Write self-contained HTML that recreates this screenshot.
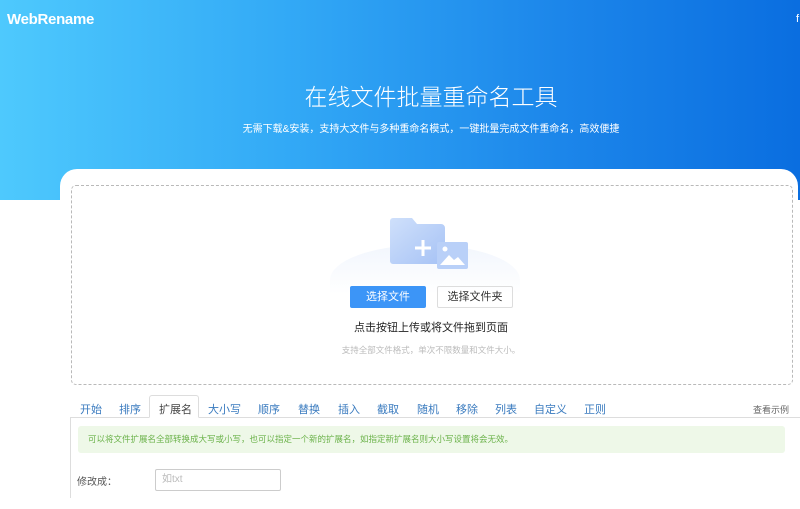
<!DOCTYPE html>
<html><head><meta charset="utf-8"><style>
*{margin:0;padding:0;box-sizing:border-box}
body{width:800px;height:495px;overflow:hidden;background:#fff;font-family:"Liberation Sans","Noto Sans CJK SC",sans-serif;position:relative}
.hero{position:absolute;left:0;top:0;width:800px;height:200px;background:linear-gradient(90deg,#4ec9fd 0%,#33aaf6 35%,#1c86ea 70%,#0a6ee0 100%)}
.logo{position:absolute;left:7px;top:11px;color:#fff;font-weight:bold;font-size:15px;letter-spacing:-0.3px}
.title{position:absolute;left:0;width:862px;top:78px;text-align:center;color:#fff;font-size:23px;font-weight:300}
.sub{position:absolute;left:0;width:862px;top:120px;text-align:center;color:#fff;font-size:10px}
.card{position:absolute;left:60px;top:169px;width:738px;height:340px;background:#fff;border-radius:17px 17px 0 0}
.drop{position:absolute;left:71px;top:185px;width:722px;height:200px;border:1px dashed #b9b9b9;border-radius:5px}
.arc{position:absolute;left:330px;top:245px;width:190px;height:70px;border-radius:50% 50% 0 0;background:linear-gradient(#f2f6fd,#fff 70%)}
.btn1{position:absolute;left:350px;top:286px;width:76px;height:22px;background:#3c95f7;color:#fff;font-size:11px;text-align:center;line-height:22px;border-radius:2px}
.btn2{position:absolute;left:437px;top:286px;width:76px;height:22px;border:1px solid #ddd;color:#333;font-size:11px;text-align:center;line-height:20px;border-radius:2px}
.t1{position:absolute;left:0;width:862px;top:319px;text-align:center;font-size:11px;color:#222}
.t2{position:absolute;left:0;width:862px;top:344px;text-align:center;font-size:8.5px;color:#bbb}
.tabs{position:absolute;left:70px;top:396px;width:730px;height:22px;border-bottom:1px solid #ddd}
.tab{position:absolute;top:5px;font-size:11px;color:#3a7bbf}
.act{position:absolute;left:79px;top:-1px;width:50px;height:23px;border:1px solid #ddd;border-bottom-color:#fff;background:#fff;border-radius:3px 3px 0 0}
.panel{position:absolute;left:70px;top:418px;width:730px;height:80px;border-left:1px solid #ddd}
.green{position:absolute;left:78px;top:426px;width:707px;height:27px;background:#eef8e8;color:#6bb24a;font-size:8.5px;line-height:27px;padding-left:10px;border-radius:3px}
.lab{position:absolute;left:77px;top:473px;font-size:10px;color:#555}
.inp{position:absolute;left:155px;top:469px;width:126px;height:22px;border:1px solid #ccc;border-radius:2px;font-size:10px;color:#bbb;padding-left:6px;line-height:20px}
</style></head><body>
<div class="hero">
<div class="logo">WebRename</div>
<div class="title">在线文件批量重命名工具</div>
<div class="sub">无需下载&amp;安装，支持大文件与多种重命名模式，一键批量完成文件重命名，高效便捷</div>
<div style="position:absolute;left:796px;top:13px;width:4px;height:12px;color:#fff;font-size:11px;overflow:hidden">f</div>
</div>
<div class="card"></div>
<div class="drop"></div>
<div class="arc"></div>
<svg style="position:absolute;left:390px;top:216px" width="80" height="54" viewBox="0 0 80 54">
<defs><linearGradient id="g" x1="0" y1="0" x2="1" y2="1"><stop offset="0" stop-color="#cfe0fb"/><stop offset="1" stop-color="#a6c2f5"/></linearGradient></defs>
<path d="M4 2 h18 l5 6 h24 a4 4 0 0 1 4 4 v33 a3 3 0 0 1 -3 3 h-49 a3 3 0 0 1 -3 -3 v-40 a3 3 0 0 1 3 -3z" fill="url(#g)"/>
<path d="M33 24 v16 M25 32 h16" stroke="#fff" stroke-width="3"/>
<rect x="47" y="26" width="31" height="27" rx="2" fill="#b9d0f8"/>
<circle cx="55" cy="33" r="2.5" fill="#fff"/>
<path d="M50 49 l9 -10 l5 5 l4 -3 l7 8z" fill="#fff"/>
</svg>
<div class="btn1">选择文件</div>
<div class="btn2">选择文件夹</div>
<div class="t1">点击按钮上传或将文件拖到页面</div>
<div class="t2">支持全部文件格式，单次不限数量和文件大小。</div>
<div class="tabs">
<div class="act"></div>
<span class="tab" style="left:10px">开始</span>
<span class="tab" style="left:49px">排序</span>
<span class="tab" style="left:89px;color:#444">扩展名</span>
<span class="tab" style="left:138px">大小写</span>
<span class="tab" style="left:188px">顺序</span>
<span class="tab" style="left:228px">替换</span>
<span class="tab" style="left:268px">插入</span>
<span class="tab" style="left:307px">截取</span>
<span class="tab" style="left:347px">随机</span>
<span class="tab" style="left:386px">移除</span>
<span class="tab" style="left:425px">列表</span>
<span class="tab" style="left:464px">自定义</span>
<span class="tab" style="left:514px">正则</span>
<span class="tab" style="left:683px;font-size:9px;color:#666;top:7px">查看示例</span>
</div>
<div class="panel"></div>
<div class="green">可以将文件扩展名全部转换成大写或小写，也可以指定一个新的扩展名，如指定新扩展名则大小写设置将会无效。</div>
<div class="lab">修改成：</div>
<div class="inp">如txt</div>
</body></html>
